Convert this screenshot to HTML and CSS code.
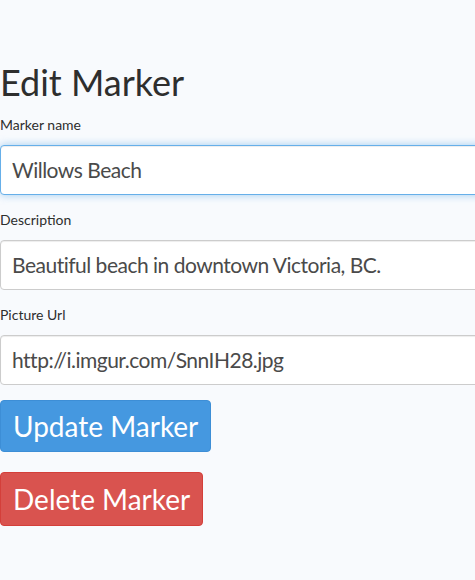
FILE: index.html
```html
<!DOCTYPE html>
<html>
<head>
<meta charset="utf-8">
<link rel="stylesheet" href="styles.css">
</head>
<body>
<div class="page">
  <h1 class="title">Edit Marker</h1>
  <form class="form">
    <div class="field">
      <label class="label" for="name">Marker name</label>
      <input class="input input-focus" id="name" type="text" value="Willows Beach">
    </div>
    <div class="field">
      <label class="label" for="desc">Description</label>
      <input class="input" id="desc" type="text" value="Beautiful beach in downtown Victoria, BC.">
    </div>
    <div class="field">
      <label class="label" for="url">Picture Url</label>
      <input class="input" id="url" type="text" value="http://i.imgur.com/SnnIH28.jpg">
    </div>
    <div class="actions">
      <button class="btn btn-update" type="button">Update Marker</button>
      <button class="btn btn-delete" type="button">Delete Marker</button>
    </div>
  </form>
</div>
</body>
</html>
```

FILE: styles.css
```css
html, body {
  margin: 0;
  padding: 0;
  background: #f8fafd;
  overflow: hidden;
}
body {
  font-family: Lato, "Open Sans", sans-serif;
  color: #333;
}
.page {
  padding-top: 63px;
  width: 560px;
}
.title {
  font-size: 36px;
  font-weight: 400;
  line-height: 1.1;
  margin: 0 0 13px 0;
  color: #2e2e2e;
}
.form {
  display: flex;
  flex-direction: column;
}
.field {
  display: flex;
  flex-direction: column;
  margin-bottom: 16px;
}
.label {
  font-size: 14px;
  line-height: 18px;
  margin-bottom: 11px;
  color: #2e2e2e;
}
.input {
  box-sizing: border-box;
  height: 50px;
  width: 540px;
  margin: 0;
  padding: 0 11px;
  font-family: Lato, "Open Sans", sans-serif;
  font-size: 21px;
  letter-spacing: -0.5px;
  color: #4a4a4a;
  background: #fff;
  border: 1px solid #ccc;
  border-radius: 4px;
  box-shadow: inset 0 1px 1px rgba(0,0,0,0.075);
  outline: none;
}
.input-focus {
  border-color: #66afe9;
  box-shadow: inset 0 1px 1px rgba(0,0,0,0.075), 0 0 8px rgba(102,175,233,0.6);
}
.actions {
  display: flex;
  flex-direction: column;
  align-items: flex-start;
  gap: 20px;
  margin-top: -1px;
}
.btn {
  box-sizing: border-box;
  height: 52px;
  padding: 0 12px;
  font-family: Lato, "Open Sans", sans-serif;
  font-size: 28px;
  color: #fff;
  border: 1px solid transparent;
  border-radius: 4px;
  cursor: pointer;
}
.btn-update {
  background: #4598e0;
  border-color: #3d8ed6;
}
.btn-delete {
  height: 54px;
  background: #d9534f;
  border-color: #d43f3a;
}
```
